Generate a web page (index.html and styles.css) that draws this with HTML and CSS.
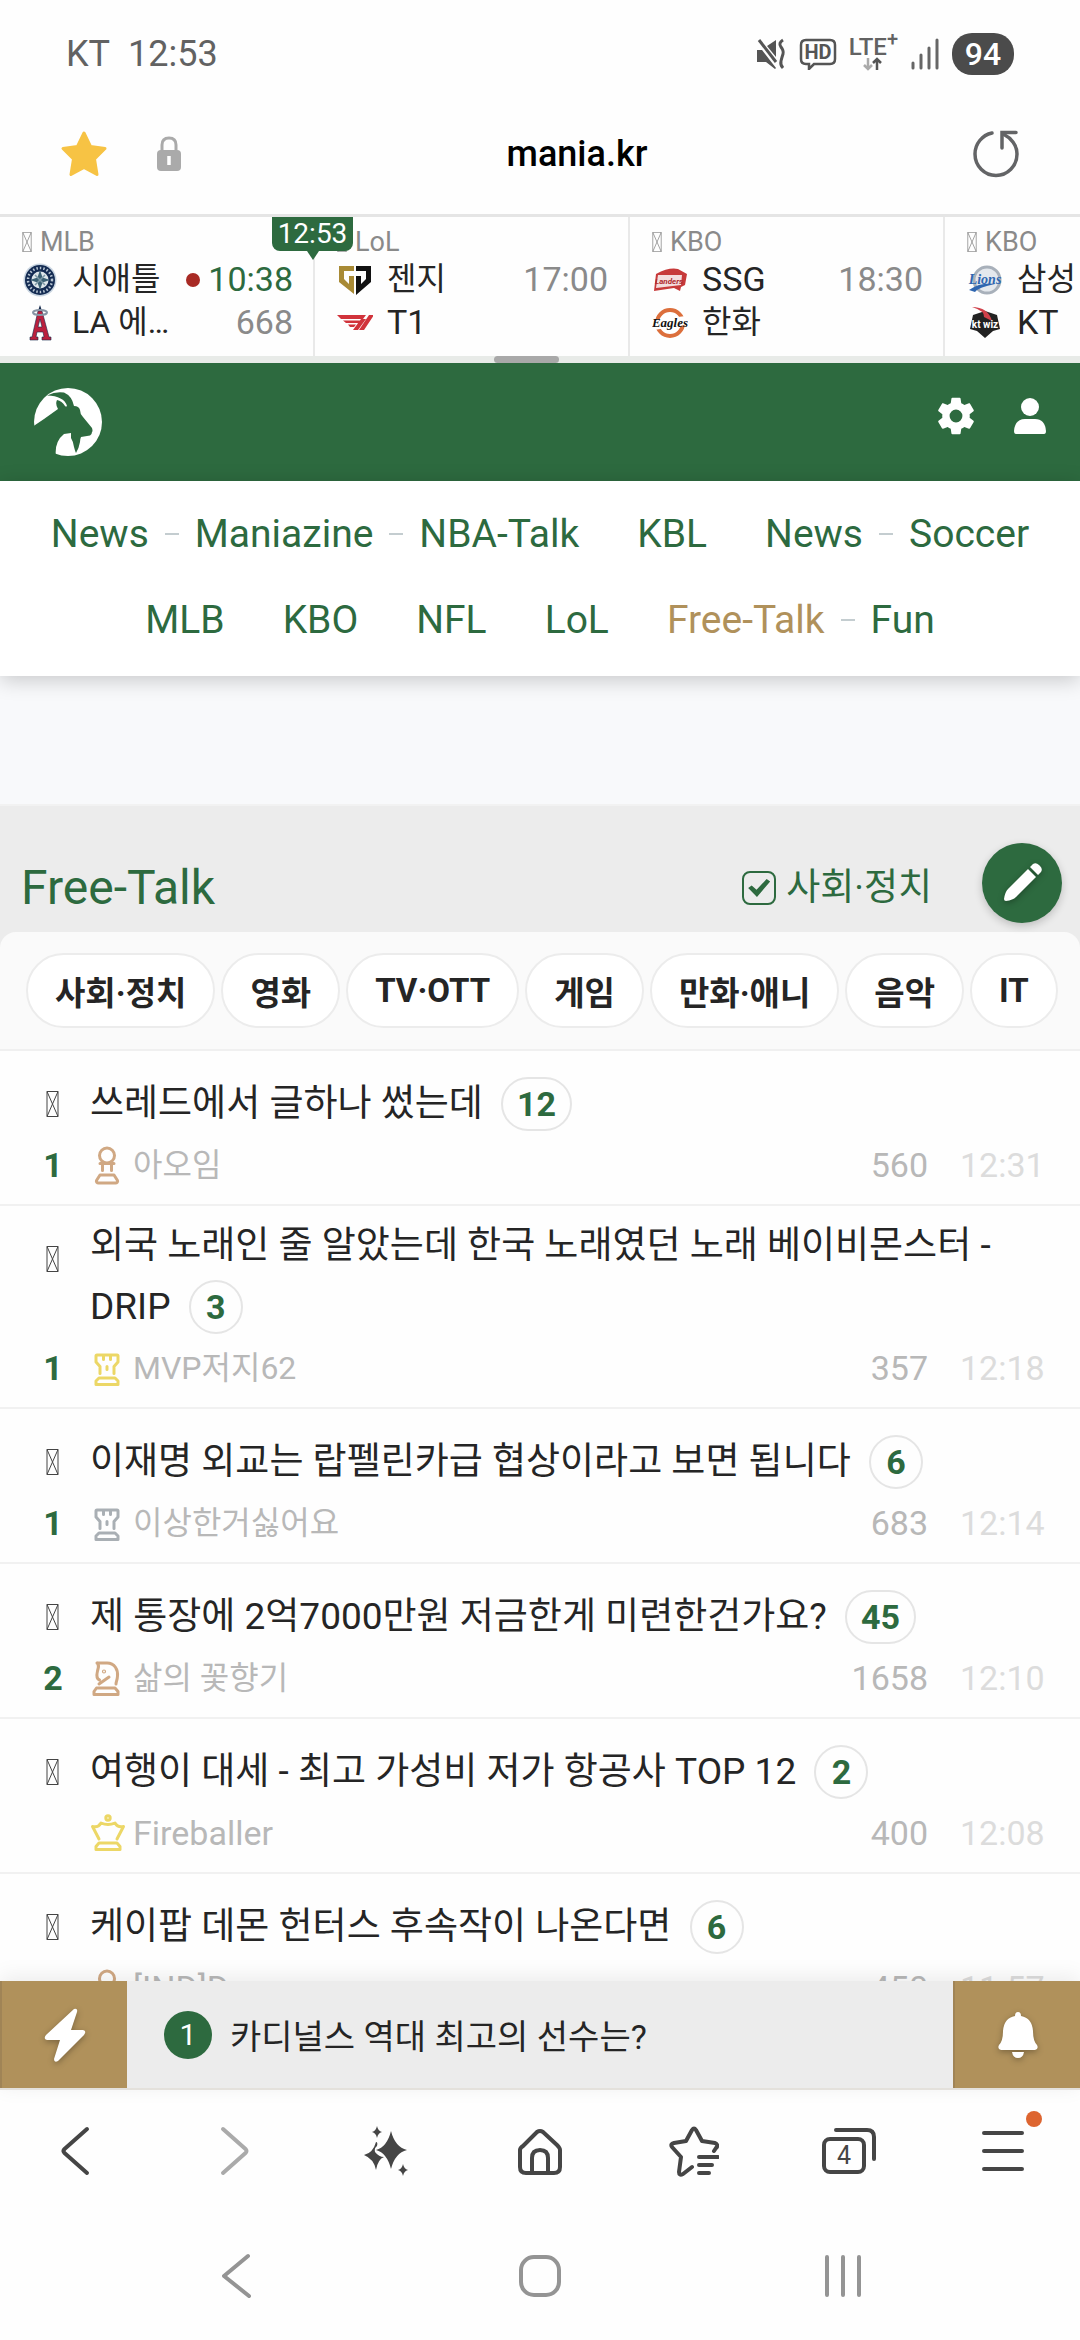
FILE: index.html
```html
<!DOCTYPE html>
<html lang="ko">
<head>
<meta charset="utf-8">
<meta name="viewport" content="width=device-width, initial-scale=1">
<title>mania.kr - Free-Talk</title>
<link rel="stylesheet" href="styles.css">
</head>
<body>
<svg class="defs" aria-hidden="true">
  <symbol id="tofu" viewBox="0 0 13 26"><path d="M1 .5h11v25H1zM1 .5l11 25M12 .5L1 25.500"/></symbol>
  <symbol id="pawn" viewBox="0 0 36 40"><circle cx="17" cy="10.500" r="7.500"/><path d="M10 18.500h14M12.500 20v5.500M21.500 20v5.500M10 30h14l3.500 5.500c.5 1.500-.5 2.500-2 2.500h-17c-1.500 0-2.500-1-2-2.500z"/></symbol>
  <symbol id="rook" viewBox="0 0 36 40"><path d="M7 7h20q1 0 1 1v6l-4 4.500v7M7 7q-1 0-1 1v6l4 4.500v7M13.500 7v4.500M20.500 7v4.500M17 18.500v3"/><path d="M9 30h16l3 3v3.500H6V33z"/></symbol>
  <symbol id="knight" viewBox="0 0 36 40"><path d="M7 5h10c8 0 11 7 10.500 13-.2 4-1.500 6-1.500 8M7 5c2.500 2 1.500 4 .5 8s-.5 8 2 9M19 19l-10 7"/><circle cx="14" cy="13.500" r=".6"/><path d="M6.500 30h18.500l3 3.500v3H4v-3z"/></symbol>
  <symbol id="queen" viewBox="0 0 36 40"><circle cx="18" cy="5" r="2.200"/><path d="M9 26L2.500 13.500c4 1 6.500 0 8.500-3.500 4.500 2 9.500 2 14 0 2 3.500 4.500 4.500 8.500 3.500L27 26"/><path d="M9 30h18l3 3.500v3H6v-3z"/></symbol>
</svg>
<div class="screen">
  <header class="status">
    <span class="carrier">KT</span><span class="clock">12:53</span>
    <div class="status-icons">
      <svg width="32" height="32" viewBox="0 0 32 32"><path d="M2 12h5l14 18-1 1-9-7H2zM12 8l9-6v17zM3 3l19 25" fill="#555"/><path d="M4 2l17 22" stroke="#555" stroke-width="3"/><path d="M28 2q-5 3-2 7t2 7-2 7 2 7" fill="none" stroke="#555" stroke-width="3"/></svg>
      <svg width="38" height="32" viewBox="0 0 38 32"><path d="M7 2h24q5 0 5 5v14q0 5-5 5H15l-5 5v-5H7q-5 0-5-5V7q0-5 5-5z" fill="none" stroke="#555" stroke-width="2.500"/><text x="19" y="21" font-size="20" font-weight="700" text-anchor="middle" fill="#555">HD</text></svg>
      <div class="lte"><span>LTE<sup>+</sup></span>
        <svg width="22" height="14" viewBox="0 0 22 14" fill="none" stroke-width="2.500"><path d="M6 1v11M2 8l4 4 4-4" stroke="#aaa"/><path d="M15 13V2M11 6l4-4 4 4" stroke="#555"/></svg></div>
      <svg width="30" height="32" viewBox="0 0 30 32"><path d="M3 25v5M11 17v13M19 10v20M27 2v28" stroke="#666" stroke-width="3" stroke-linecap="round"/></svg>
      <span class="battery">94</span>
    </div>
  </header>

  <div class="urlbar">
    <button aria-label="즐겨찾기"><svg width="48" height="48" viewBox="0 0 48 48"><path d="M24 3l6.500 13.500L45 18.500 34.500 29l2.500 15.500L24 37.500 11 44.500 13.500 29 3 18.500l14.500-2z" fill="#f7c344" stroke="#f7c344" stroke-width="3" stroke-linejoin="round"/></svg></button>
    <svg class="lock" width="26" height="36" viewBox="0 0 26 36"><path d="M6 15V9q0-7 7-7t7 7v6" fill="none" stroke="#aaa" stroke-width="3"/><rect x="1" y="14" width="24" height="21" rx="4" fill="#aaa"/><path d="M13 20v9" stroke="#fff" stroke-width="3.500"/></svg>
    <span class="address">mania.kr</span>
    <button aria-label="새로고침"><svg width="48" height="50" viewBox="0 0 48 50" fill="none" stroke="#636466" stroke-width="3.500" stroke-linecap="round"><path d="M20 4C10 6 3 15 3 25c0 12 9.500 21.500 21 21.500S45 37 45 25C45 16 39 9 32 5.500"/><path d="M44 3.500H30V19"/></svg></button>
  </div>

  <section class="scores">
    <article class="game">
      <h3><svg class="tofu"><use href="#tofu"/></svg>MLB</h3>
      <div class="team"><svg viewBox="0 0 36 36"><circle cx="18" cy="18" r="16.500" fill="#c8d4e0"/><circle cx="18" cy="18" r="15" fill="#142b52"/><circle cx="18" cy="18" r="12" fill="none" stroke="#b9c6d3" stroke-width="2.500" stroke-dasharray="1.500 2"/><circle cx="18" cy="18" r="8.500" fill="#dfe7ea"/><path d="M18 8l2.500 7.500L28 18l-7.500 2.500L18 28l-2.500-7.500L8 18l7.500-2.500z" fill="#3c6275"/><path d="M13 13l10 10M23 13L13 23" stroke="#7e99a5" stroke-width="1.500"/></svg><span>시애틀</span><b class="live">10:38</b></div>
      <div class="team"><svg viewBox="0 0 36 36"><path d="M18 0l2 6h-4z" fill="#14284b"/><path d="M8 35v-3h2L16 6h4l7 26h2v3h-9v-3h2l-1-5h-6l-1 5h2v3zM16 22h4l-2-8z" fill="#ba1f3d" stroke="#14284b" stroke-width=".6"/><ellipse cx="18" cy="7.500" rx="7" ry="2.500" fill="none" stroke="#8795a5" stroke-width="2"/></svg><span>LA 에…</span><b>668</b></div>
    </article>
    <article class="game">
      <h3><svg class="tofu"><use href="#tofu"/></svg>LoL</h3>
      <div class="team"><svg viewBox="0 0 36 36"><path d="M2 4h15v5H7v8l5 5v-8h5v18L2 20z" fill="#a88a35"/><path d="M19 4h15v16L19 33V14h5v8l5-5V9H19z" fill="#111"/></svg><span>젠지</span><b>17:00</b></div>
      <div class="team"><svg viewBox="0 0 36 36"><path d="M0 10h29l-3 4H4zM6 15.500h19l-2 2.500H9zM11 19.500h8l-2 2.500h-4zM24 14h5l-8 11h-5zM32 10h5L27 25h-5z" fill="#d1333b"/></svg><span class="en">T1</span></div>
    </article>
    <article class="game">
      <h3><svg class="tofu"><use href="#tofu"/></svg>KBO</h3>
      <div class="team"><svg viewBox="0 0 36 36"><path d="M4 12Q17 5 26 7l9 5-2 11-4 2-1 4-6-3-20 3z" fill="#c73a3a"/><path d="M6 13l24 0-1 10-25 3z" fill="#f3dede"/><text x="17" y="22" font-size="8" font-weight="700" font-style="italic" text-anchor="middle" fill="#b02a2f">Landers</text></svg><span class="en">SSG</span><b>18:30</b></div>
      <div class="team"><svg viewBox="0 0 36 36"><circle cx="18" cy="18" r="13" fill="#fff" stroke="#dc6f3c" stroke-width="4"/><path d="M1 15l33-4v9L2 25z" fill="#fff"/><text x="18" y="22" font-size="13" font-weight="700" font-style="italic" text-anchor="middle" fill="#111" class="script">Eagles</text></svg><span>한화</span></div>
    </article>
    <article class="game">
      <h3><svg class="tofu"><use href="#tofu"/></svg>KBO</h3>
      <div class="team"><svg viewBox="0 0 36 36"><circle cx="20" cy="18" r="13" fill="#e4e8ed" stroke="#a8b0ba" stroke-width="3"/><path d="M2 28Q14 20 28 22 12 25 8 30z" fill="#2f66b0"/><text x="18" y="22" font-size="14" font-weight="700" font-style="italic" text-anchor="middle" fill="#2f66b0" class="script">Lions</text></svg><span>삼성</span></div>
      <div class="team"><svg viewBox="0 0 36 36"><path d="M6 10l12-4 12 4 3 14-7 2-8 7-8-7-7-2z" fill="#222"/><path d="M5 2q16 0 20 14l-8-4q1-6-12-10z" fill="#d0404a"/><text x="18" y="23" font-size="10" font-weight="700" text-anchor="middle" fill="#fff">kt wiz</text></svg><span class="en">KT</span></div>
    </article>
    <time class="now">12:53</time>
  </section>
  <div class="scrollbar"><i></i></div>

  <header class="site">
    <a href="#" aria-label="mania.kr"><svg width="68" height="68" viewBox="0 0 68 68"><circle cx="34" cy="34" r="34" fill="#fff"/><path d="M-2 39L10 31 24 21Q21 16 23 12q5 1 8 6 1 1 2 0Q30 8 13 7.500 22 3 30 4.500 38 8 40 18q5 0 6 4 0 4 3 7l9 11q1 3 0 4 0 2-2 3.500l-9 1.500q-1 2-1 5-1 6-4 11-1-2-2-6-1-6-3-9v-5l-7 1q-10 8-8 23H-2z" fill="#2d6a3f"/></svg></a>
    <div class="site-tools">
      <button aria-label="설정"><svg width="44" height="46" viewBox="0 0 24 24" fill="#fff"><path d="M19.430 12.980c.040-.320.070-.640.070-.980s-.030-.660-.070-.980l2.110-1.650c.190-.150.240-.420.120-.640l-2-3.460c-.120-.220-.390-.300-.610-.220l-2.490 1c-.520-.400-1.080-.730-1.690-.980l-.380-2.650C14.460 2.180 14.250 2 14 2h-4c-.250 0-.460.180-.490.420l-.380 2.650c-.610.250-1.170.590-1.690.980l-2.490-1c-.230-.090-.490 0-.610.220l-2 3.460c-.130.220-.070.490.120.640l2.110 1.650c-.040.320-.070.650-.070.980s.030.660.070.980l-2.110 1.650c-.190.150-.240.420-.120.640l2 3.460c.120.220.390.300.610.220l2.490-1c.520.400 1.080.730 1.690.980l.380 2.650c.030.240.240.420.490.420h4c.250 0 .460-.180.490-.420l.380-2.650c.610-.250 1.170-.590 1.690-.980l2.490 1c.230.090.490 0 .610-.220l2-3.460c.120-.220.070-.490-.120-.640zM12 15.500a3.500 3.500 0 1 1 0-7 3.500 3.500 0 0 1 0 7z"/></svg></button>
      <button aria-label="내 정보"><svg width="32" height="36" viewBox="0 0 32 36" fill="#fff"><circle cx="16" cy="9" r="9"/><path d="M0 33Q1 21 11 21h10q10 0 11 12 0 3-2 3H2q-2 0-2-3z"/></svg></button>
    </div>
  </header>

  <nav class="boards">
    <div><a href="#">News</a><i></i><a href="#">Maniazine</a><i></i><a href="#">NBA-Talk</a></div>
    <div><a href="#">KBL</a></div>
    <div><a href="#">News</a><i></i><a href="#">Soccer</a></div>
    <div><a href="#">MLB</a></div>
    <div><a href="#">KBO</a></div>
    <div><a href="#">NFL</a></div>
    <div><a href="#">LoL</a></div>
    <div><a href="#" class="current">Free-Talk</a><i></i><a href="#">Fun</a></div>
  </nav>
  <div class="banner"></div>

  <main>
    <div class="board-head">
      <h1>Free-Talk</h1>
      <label><input type="checkbox" checked>사회·정치</label>
      <button class="write" aria-label="글쓰기"><svg width="44" height="44" viewBox="0 0 44 44" fill="#fff"><path d="M28 8l8 8-20 20q-3 3-10 4-2 0-2-2 1-7 4-10zM30 6l3-3q3-2 6 1l1 1q3 3 1 6l-3 3z"/></svg></button>
    </div>
    <div class="chips">
      <button>사회·정치</button><button>영화</button><button>TV·OTT</button><button>게임</button><button>만화·애니</button><button>음악</button><button>IT</button>
    </div>
    <ul class="posts">
      <li><svg class="tofu"><use href="#tofu"/></svg><a href="#">쓰레드에서 글하나 썼는데 <b class="replies">12</b></a>
        <b class="votes">1</b><div class="meta"><svg class="rank bronze"><use href="#pawn"/></svg><span>아오임</span><em>560</em><time>12:31</time></div></li>
      <li><svg class="tofu"><use href="#tofu"/></svg><a href="#">외국 노래인 줄 알았는데 한국 노래였던 노래 베이비몬스터 - DRIP <b class="replies">3</b></a>
        <b class="votes">1</b><div class="meta"><svg class="rank gold"><use href="#rook"/></svg><span>MVP저지62</span><em>357</em><time>12:18</time></div></li>
      <li><svg class="tofu"><use href="#tofu"/></svg><a href="#">이재명 외교는 랍펠린카급 협상이라고 보면 됩니다 <b class="replies">6</b></a>
        <b class="votes">1</b><div class="meta"><svg class="rank silver"><use href="#rook"/></svg><span>이상한거싫어요</span><em>683</em><time>12:14</time></div></li>
      <li><svg class="tofu"><use href="#tofu"/></svg><a href="#">제 통장에 2억7000만원 저금한게 미련한건가요? <b class="replies">45</b></a>
        <b class="votes">2</b><div class="meta"><svg class="rank bronze"><use href="#knight"/></svg><span>삶의 꽃향기</span><em>1658</em><time>12:10</time></div></li>
      <li><svg class="tofu"><use href="#tofu"/></svg><a href="#">여행이 대세 - 최고 가성비 저가 항공사 TOP 12 <b class="replies">2</b></a>
        <b class="votes"></b><div class="meta"><svg class="rank gold"><use href="#queen"/></svg><span class="en">Fireballer</span><em>400</em><time>12:08</time></div></li>
      <li><svg class="tofu"><use href="#tofu"/></svg><a href="#">케이팝 데몬 헌터스 후속작이 나온다면 <b class="replies">6</b></a>
        <b class="votes"></b><div class="meta"><svg class="rank bronze"><use href="#pawn"/></svg><span class="en">[IND]D</span><em>450</em><time>11:57</time></div></li>
    </ul>
  </main>

  <div class="ticker">
    <button aria-label="번개"><svg width="44" height="56" viewBox="0 0 44 56" fill="#fff"><path d="M31 2q4-1 3 3l-6 18h12q4 1 1 5L15 54q-4 2-4-2l6-19H4q-4-1-1-5z"/></svg></button>
    <a href="#"><b>1</b>카디널스 역대 최고의 선수는?</a>
    <button aria-label="알림"><svg width="42" height="48" viewBox="0 0 42 48" fill="#fff"><path d="M21 1q3 0 3 4 11 2 12 15 0 10 4 14 2 4-2 5H4q-4-1-2-5 4-4 4-14Q7 7 18 5q0-4 3-4zM15 41h12q-1 6-6 6t-6-6z"/></svg></button>
  </div>

  <div class="toolbar">
    <button aria-label="뒤로"><svg width="48" height="52" viewBox="0 0 48 52"><path d="M34 4L11.500 24q-2 2 0 4L34 48"/></svg></button>
    <button aria-label="앞으로" class="off"><svg width="48" height="52" viewBox="0 0 48 52"><path d="M16 4l22.500 20q2 2 0 4L16 48"/></svg></button>
    <button aria-label="AI"><svg class="solid" width="46" height="50" viewBox="0 0 44 50"><path d="M27 5q4 16 16 19-12 3-16 19-4-16-15-19 11-3 15-19z"/><path d="M13 0q1 5 5 6-4 1-5 6-1-5-5-6 4-1 5-6zM39 38q1 5 5 6-4 1-5 6-1-5-5-6 4-1 5-6zM12 16q2 0 1 4-3 2-2 6 4 5 9 5-6 2-8 13-2-11-12-15 9-2 12-13z"/></svg></button>
    <button aria-label="홈"><svg width="48" height="50" viewBox="0 0 48 50"><path d="M7 20L21 6q3-2 6 0l14 13q3 3 3 5v17q0 6-6 6H10q-6 0-6-6V24q0-2 3-4zM16 47V32q0-8 8-8t8 8v15"/></svg></button>
    <button aria-label="북마크"><svg width="50" height="52" viewBox="0 0 50 52"><path d="M23 42l-9 7q-4 2-4-2l2-15-9-10q-2-3 2-4l12-2 6-11q2-3 4 0l6 11 13 2q4 2 1 5l-2 3M30 32h19M30 40h13M30 48h10"/></svg></button>
    <button aria-label="탭"><svg width="54" height="48" viewBox="0 0 54 48"><rect x="2" y="12" width="40" height="33" rx="6"/><path d="M14 3h31q7 0 7 7v22"/><text x="22" y="37" font-size="25" text-anchor="middle">4</text></svg></button>
    <button aria-label="메뉴" class="menu"><svg width="42" height="44" viewBox="0 0 42 44"><path d="M2 4h38M2 22h38M2 40h38"/></svg><i></i></button>
  </div>
  <div class="sysnav">
    <button aria-label="뒤로"><svg width="30" height="46" viewBox="0 0 30 46"><path d="M26 3L2 23l25 20"/></svg></button>
    <button aria-label="홈"><svg width="46" height="46" viewBox="0 0 46 46"><rect x="4" y="4" width="38" height="38" rx="13"/></svg></button>
    <button aria-label="최근 앱"><svg width="42" height="46" viewBox="0 0 42 46"><path d="M5 4v38M21 4v38M37 4v38"/></svg></button>
  </div>
</div>
</body>
</html>
```
FILE: styles.css
```css
:root {
  --green: #2d6a3f;
  --gold: #b0915b;
  --ink: #252525;
}
* { box-sizing: border-box; }
body {
  margin: 0;
  background: #fefefe;
  color: var(--ink);
  font-family: Roboto, "Noto Sans CJK KR", sans-serif;
}
button {
  padding: 0;
  border: 0;
  background: none;
  font: inherit;
  color: inherit;
  display: flex;
  align-items: center;
  justify-content: center;
}
a { color: inherit; text-decoration: none; }
svg { display: block; flex: none; }
.defs { position: absolute; width: 0; height: 0; }
.screen {
  height: 100vh;
  display: flex;
  flex-direction: column;
  overflow: hidden;
}

.tofu { width: 13px; height: 26px; fill: none; stroke: #444; stroke-width: 1; }

/* device status bar */
.status {
  flex: none;
  height: 108px;
  padding: 0 66px;
  display: flex;
  align-items: center;
  color: #626262;
  font-size: 36px;
}
.clock { margin-left: 18px; }
.status-icons { margin-left: auto; display: flex; align-items: center; gap: 12px; }
.lte {
  display: flex;
  flex-direction: column;
  align-items: center;
  font-size: 24px;
  line-height: 20px;
  font-weight: 500;
}
.lte sup { font-size: 20px; line-height: 0; }
.battery {
  width: 62px;
  height: 42px;
  border-radius: 20px;
  background: #4b4b4b;
  color: #fff;
  font-size: 32px;
  font-weight: 500;
  line-height: 42px;
  text-align: center;
}

/* address bar */
.urlbar {
  flex: none;
  height: 109px;
  padding: 0 60px 14px;
  display: flex;
  align-items: center;
  border-bottom: 3px solid #e5e5e5;
}
.lock { margin-left: 48px; }
.address {
  flex: 1;
  text-align: center;
  color: #000;
  font-size: 36px;
  font-weight: 500;
}

/* scoreboard strip */
.scores { flex: none; position: relative; display: flex; overflow: hidden; }
.game {
  flex: none;
  width: 315px;
  padding: 9px 20px 12px 22px;
  border-right: 2px solid #e9e9e9;
}
.game h3 {
  margin: 0;
  display: flex;
  align-items: center;
  gap: 8px;
  color: #8a8a8a;
  font-size: 27px;
  line-height: 32px;
  font-weight: 400;
}
.game .tofu { width: 10px; height: 20px; stroke: #888; }
.team { display: flex; align-items: center; font-size: 32px; height: 43px; line-height: 43px; }
.team svg { width: 36px; height: 36px; margin-right: 14px; }
.team b { margin-left: auto; font-size: 34px; font-weight: 400; color: #8a8a8a; }
.team .live { color: var(--green); display: flex; align-items: center; gap: 8px; }
.live::before { content: ""; width: 14px; height: 14px; border-radius: 50%; background: #a82a24; }
.en { font-size: 34px; }
.script { font-family: "Liberation Serif", serif; }
.now {
  position: absolute;
  left: 272px;
  top: 0;
  width: 81px;
  height: 34px;
  border-radius: 0 0 8px 8px;
  background: var(--green);
  color: #fff;
  font-size: 28px;
  line-height: 34px;
  text-align: center;
}
.now::after {
  content: "";
  position: absolute;
  left: 35px;
  top: 34px;
  border: 6px solid transparent;
  border-top: 9px solid var(--green);
  border-bottom: 0;
}
.scrollbar { flex: none; height: 7px; padding-right: 28px; background: #e8ebe8; }
.scrollbar i { display: block; width: 65px; height: 7px; margin: 0 auto; border-radius: 4px; background: #a9a9a9; }

/* site header */
.site {
  flex: none;
  height: 118px;
  padding: 0 34px;
  display: flex;
  align-items: center;
  justify-content: space-between;
  background: var(--green);
}
.site-tools { display: flex; align-items: center; gap: 36px; padding-bottom: 12px; }
.boards {
  flex: none;
  position: relative;
  padding: 30px 20px 33px;
  display: flex;
  flex-wrap: wrap;
  justify-content: center;
  gap: 40px 58px;
  background: #fff;
  color: var(--green);
  font-size: 39px;
  line-height: 46px;
  box-shadow: 0 4px 20px rgba(0, 0, 0, .2);
}
.boards div { display: flex; align-items: center; gap: 16px; }
.boards i { width: 14px; height: 2px; background: #c4cdd0; }
.boards .current { color: var(--gold); }
.banner { flex: none; height: 130px; background: #f8f9fb; border-bottom: 2px solid #f2f2f2; }

/* board */
main { flex: 1 1 0; min-height: 0; overflow: hidden; }
.board-head {
  padding: 37px 18px 9px 21px;
  display: flex;
  align-items: center;
  background: #ececec;
  color: var(--green);
}
.board-head h1 { margin: 0; padding-top: 10px; font-size: 48px; line-height: 54px; font-weight: 400; }
.board-head label {
  margin-left: auto;
  padding-top: 10px;
  display: flex;
  align-items: center;
  gap: 10px;
  font-size: 37px;
  line-height: 54px;
}
.board-head input {
  appearance: none;
  width: 34px;
  height: 34px;
  margin: 0;
  border: 2px solid var(--green);
  border-radius: 8px;
  display: grid;
  place-items: center;
}
.board-head input:checked::before {
  content: "";
  width: 22px;
  height: 18px;
  background: var(--green);
  clip-path: polygon(0 50%, 16% 36%, 38% 60%, 84% 0, 100% 14%, 40% 100%);
}
.write {
  width: 80px;
  height: 80px;
  margin-left: 50px;
  border-radius: 50%;
  background: var(--green);
  box-shadow: 0 3px 8px rgba(0, 0, 0, .2);
}
.write svg, .ticker svg { filter: drop-shadow(0 2px 3px rgba(0, 0, 0, .3)); }
.chips {
  padding: 21px 26px;
  display: flex;
  gap: 6px;
  overflow: hidden;
  background: #fafafa;
  border-bottom: 2px solid #f0f0f0;
  border-radius: 16px 16px 0 0;
}
main { background: linear-gradient(#ececec 200px, #fefefe 200px); }
.chips button {
  flex: none;
  height: 75px;
  padding: 0 27px;
  border: 2px solid #ececec;
  border-radius: 38px;
  background: #fff;
  font-size: 33px;
  font-weight: 700;
}
.posts { margin: 0; padding: 0; list-style: none; background: #fefefe; }
.posts li {
  padding: 16px 36px 19px;
  display: grid;
  grid-template-columns: 54px 1fr;
  border-bottom: 2px solid #f1f1f1;
}
.posts li > .tofu { margin: 24px 0 0 10px; }
.posts a { font-size: 37px; line-height: 48px; }
.replies {
  display: inline-block;
  vertical-align: middle;
  min-width: 54px;
  height: 54px;
  margin: 10px 0 14px 9px;
  padding: 0 14px;
  border: 2px solid #e5e5e5;
  border-radius: 27px;
  color: var(--green);
  font-size: 34px;
  line-height: 50px;
  text-align: center;
}
.votes { color: var(--green); font-size: 34px; line-height: 40px; padding-right: 20px; text-align: center; }
.meta { display: flex; align-items: center; font-size: 32px; line-height: 40px; color: #b8b8b8; }
.meta em { margin-left: auto; font-size: 34px; font-style: normal; }
.meta time { width: 84px; margin-left: 32px; color: #dcdcdc; font-size: 34px; white-space: nowrap; }
.rank { width: 36px; height: 40px; margin-right: 7px; fill: none; stroke: currentColor; stroke-width: 3; stroke-linecap: round; stroke-linejoin: round; }
.bronze { color: #d0a883; }
.silver { color: #a9afb4; }
.gold { color: #ecd766; }

/* hot-post ticker */
.ticker {
  flex: none;
  position: relative;
  height: 109px;
  display: flex;
  background: #ececec;
  border-bottom: 2px solid #e4e1dc;
  box-shadow: 0 -4px 20px rgba(0, 0, 0, .08);
}
.ticker button { width: 127px; background: var(--gold); border-left: 2px solid #a08456; }
.ticker a { flex: 1; padding-left: 37px; display: flex; align-items: center; gap: 18px; font-size: 34px; }
.ticker b {
  width: 48px;
  height: 48px;
  border-radius: 50%;
  background: var(--green);
  color: #fff;
  font-size: 30px;
  font-weight: 400;
  line-height: 48px;
  text-align: center;
}

/* browser toolbar and system navigation */
.toolbar, .sysnav { flex: none; display: grid; fill: none; stroke-linecap: round; stroke-linejoin: round; }
.toolbar { grid-template-columns: repeat(7, 1fr); height: 122px; stroke: #454545; stroke-width: 4; }
.toolbar .off { stroke: #aaa; }
.toolbar .solid { fill: #454545; stroke: none; }
.toolbar text { fill: #454545; stroke: none; }
.menu { position: relative; }
.menu i { position: absolute; right: 38px; top: 21px; width: 16px; height: 16px; border-radius: 50%; background: #dd6530; }
.sysnav { grid-template-columns: repeat(3, 1fr); height: 128px; padding: 0 86px; stroke: #949494; stroke-width: 4; }
```
